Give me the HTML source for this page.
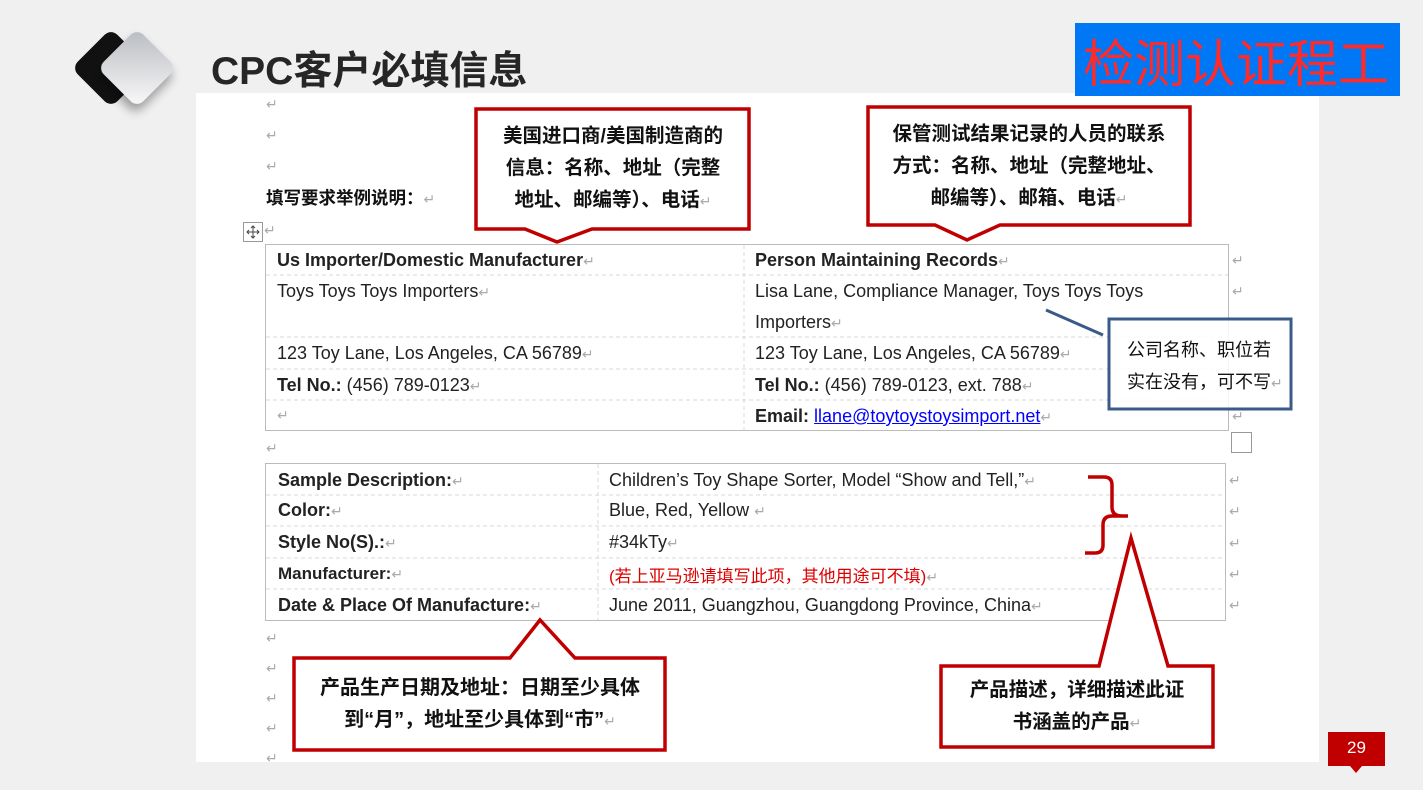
<!DOCTYPE html>
<html><head><meta charset="utf-8"><style>
*{margin:0;padding:0;box-sizing:border-box}
body{width:1423px;height:790px;background:#f0f0f0;position:relative;overflow:hidden;font-family:"Liberation Sans","Noto Sans CJK SC",sans-serif;color:#222}
.a{position:absolute;white-space:nowrap}
.t{font-size:18px;color:#222}
.b{font-weight:bold}
.r{color:#aaa;font-size:14px;font-weight:normal}
.cj{font-family:"Liberation Sans","Noto Sans CJK SC",sans-serif;font-weight:bold;font-size:19.5px;color:#111;text-align:center;line-height:32px}
</style></head><body>
<div class="a" style="left:196px;top:93px;width:1123px;height:669px;background:#fff"></div>
<svg class="a" style="left:0;top:0" width="1423" height="790">
<defs><linearGradient id="g" x1="0" y1="0" x2="1" y2="1"><stop offset="0" stop-color="#b8bbc0"/><stop offset="1" stop-color="#fafafa"/></linearGradient></defs>
<rect x="83" y="40" width="56" height="56" rx="9" transform="rotate(45 111 68)" fill="#111"/>
<rect x="109" y="40" width="56" height="56" rx="9" transform="rotate(45 137 68)" fill="url(#g)" style="filter:drop-shadow(4px 6px 5px rgba(0,0,0,.35))"/>
<g stroke="#bbb" fill="none">
<rect x="265.5" y="244.5" width="963" height="186"/>
<rect x="265.5" y="463.5" width="960" height="157"/>
</g>
<g stroke="#d8d8d8" stroke-dasharray="4 3">
<line x1="744" y1="245" x2="744" y2="430"/>
<line x1="266" y1="275" x2="1228" y2="275"/>
<line x1="266" y1="337" x2="1228" y2="337"/>
<line x1="266" y1="369" x2="1228" y2="369"/>
<line x1="266" y1="400" x2="1228" y2="400"/>
<line x1="598" y1="464" x2="598" y2="620"/>
<line x1="266" y1="495" x2="1225" y2="495"/>
<line x1="266" y1="526" x2="1225" y2="526"/>
<line x1="266" y1="558" x2="1225" y2="558"/>
<line x1="266" y1="589" x2="1225" y2="589"/>
</g>
<rect x="243.5" y="222.5" width="19" height="19" fill="#fff" stroke="#999"/>
<path d="M247 232h12M253 226v12M251 228l2-2 2 2M251 236l2 2 2-2M249 230l-2 2 2 2M257 230l2 2-2 2" stroke="#444" fill="none"/>
<rect x="1231.5" y="432.5" width="20" height="20" fill="#fff" stroke="#999"/>
<g stroke="#c00000" stroke-width="3.5" fill="#fff" stroke-linejoin="miter">
<path d="M476 109H749V229H592L557 242L525 229H476Z"/>
<path d="M868 107H1190V225H1000L967 240L935 225H868Z"/>
<path d="M294 658H510L540 620L575 658H665V750H294Z"/>
<path d="M941 666H1099L1131 538L1168 666H1213V747H941Z"/>
<path d="M1088 477h16q8 0 8 8v22q0 9 10 9h6M1122 516h-10q-9 0-9 9v20q0 8-8 8h-10" fill="none"/>
</g>
<line x1="1046" y1="310" x2="1103" y2="335" stroke="#3a5a8a" stroke-width="3"/>
<rect x="1109" y="319" width="182" height="90" fill="#fff" fill-opacity="0.85" stroke="#3a5a8a" stroke-width="3"/>
<rect x="1075" y="23" width="325" height="73" fill="#0078f5"/>
<rect x="1328" y="732" width="57" height="34" fill="#c00000"/>
<path d="M1350 766l6 7 6-7z" fill="#c00000"/>
</svg>
<div class="a" style="left:211px;top:40px;font-size:39px;font-weight:bold;color:#262626;font-family:'Liberation Sans','Noto Sans CJK SC',sans-serif">CPC客户必填信息</div>
<div class="a" style="left:1083px;top:28px;font-size:51px;line-height:64px;color:#ff2a2a;font-family:'Noto Sans CJK SC',sans-serif">检测认证程工</div>
<div class="a" style="left:1328px;top:738px;width:57px;text-align:center;color:#fff;font-size:17px">29</div>
<div class="a r" style="left:266px;top:96px">↵</div>
<div class="a r" style="left:266px;top:127px">↵</div>
<div class="a r" style="left:266px;top:158px">↵</div>
<div class="a" style="left:266px;top:185px;font-size:17.5px;font-weight:bold;color:#111">填写要求举例说明：<span class="r">↵</span></div>
<div class="a r" style="left:264px;top:222px">↵</div>
<div class="a t" style="left:277px;top:250px"><b>Us Importer/Domestic Manufacturer</b><span class="r">↵</span></div>
<div class="a t" style="left:277px;top:281px">Toys Toys Toys Importers<span class="r">↵</span></div>
<div class="a t" style="left:277px;top:343px">123 Toy Lane, Los Angeles, CA 56789<span class="r">↵</span></div>
<div class="a t" style="left:277px;top:375px"><b>Tel No.:</b> (456) 789-0123<span class="r">↵</span></div>
<div class="a r" style="left:277px;top:407px">↵</div>
<div class="a t" style="left:755px;top:250px"><b>Person Maintaining Records</b><span class="r">↵</span></div>
<div class="a t" style="left:755px;top:281px">Lisa Lane, Compliance Manager, Toys Toys Toys</div>
<div class="a t" style="left:755px;top:312px">Importers<span class="r">↵</span></div>
<div class="a t" style="left:755px;top:343px">123 Toy Lane, Los Angeles, CA 56789<span class="r">↵</span></div>
<div class="a t" style="left:755px;top:375px"><b>Tel No.:</b> (456) 789-0123, ext. 788<span class="r">↵</span></div>
<div class="a t" style="left:755px;top:406px"><b>Email:</b> <span style="color:#00f;text-decoration:underline">llane@toytoystoysimport.net</span><span class="r">↵</span></div>
<div class="a r" style="left:1232px;top:252px">↵</div><div class="a r" style="left:1232px;top:283px">↵</div><div class="a r" style="left:1232px;top:408px">↵</div>
<div class="a r" style="left:266px;top:440px">↵</div>
<div class="a t b" style="left:278px;top:470px">Sample Description:<span class="r">↵</span></div>
<div class="a t b" style="left:278px;top:500px">Color:<span class="r">↵</span></div>
<div class="a t b" style="left:278px;top:532px">Style No(S).:<span class="r">↵</span></div>
<div class="a t b" style="left:278px;top:564px;font-size:17px">Manufacturer:<span class="r">↵</span></div>
<div class="a t b" style="left:278px;top:595px">Date &amp; Place Of Manufacture:<span class="r">↵</span></div>
<div class="a t" style="left:609px;top:470px">Children’s Toy Shape Sorter, Model “Show and Tell,”<span class="r">↵</span></div>
<div class="a t" style="left:609px;top:500px">Blue, Red, Yellow <span class="r">↵</span></div>
<div class="a t" style="left:609px;top:532px">#34kTy<span class="r">↵</span></div>
<div class="a t" style="left:609px;top:562px;color:#d00;font-size:17px">(若上亚马逊请填写此项，其他用途可不填)<span class="r">↵</span></div>
<div class="a t" style="left:609px;top:595px">June 2011, Guangzhou, Guangdong Province, China<span class="r">↵</span></div>
<div class="a r" style="left:1229px;top:472px">↵</div><div class="a r" style="left:1229px;top:503px">↵</div><div class="a r" style="left:1229px;top:535px">↵</div><div class="a r" style="left:1229px;top:566px">↵</div><div class="a r" style="left:1229px;top:597px">↵</div>
<div class="a r" style="left:266px;top:630px">↵</div><div class="a r" style="left:266px;top:660px">↵</div><div class="a r" style="left:266px;top:690px">↵</div><div class="a r" style="left:266px;top:720px">↵</div><div class="a r" style="left:266px;top:750px">↵</div>
<div class="a cj" style="left:478px;top:120px;width:270px">美国进口商/美国制造商的<br>信息：名称、地址（完整<br>地址、邮编等）、电话<span class="r">↵</span></div>
<div class="a cj" style="left:870px;top:118px;width:318px">保管测试结果记录的人员的联系<br>方式：名称、地址（完整地址、<br>邮编等）、邮箱、电话<span class="r">↵</span></div>
<div class="a cj" style="left:296px;top:672px;width:368px;font-size:20px">产品生产日期及地址：日期至少具体<br>到“月”，地址至少具体到“市”<span class="r">↵</span></div>
<div class="a cj" style="left:943px;top:674px;width:268px">产品描述，详细描述此证<br>书涵盖的产品<span class="r">↵</span></div>
<div class="a" style="left:1127px;top:334px;font-size:18px;line-height:32px;color:#111;font-family:'Liberation Sans','Noto Sans CJK SC',sans-serif">公司名称、职位若<br>实在没有，可不写<span class="r">↵</span></div>
</body></html>
